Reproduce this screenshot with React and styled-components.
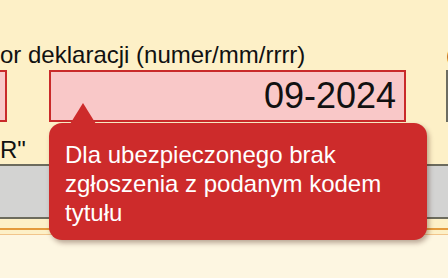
import React from "react";
import styled, { createGlobalStyle } from "styled-components";

const GlobalStyle = createGlobalStyle`
  html, body {
    margin: 0;
    padding: 0;
    background: #fdf0c7;
  }
  * { box-sizing: border-box; }
`;

const Page = styled.div`
  width: 448px;
  height: 278px;
  overflow: hidden;
  background: #fdf0c7;
  font-family: "Liberation Sans", Arial, sans-serif;
  color: #111;
  display: flex;
  flex-direction: column;
`;

const FormArea = styled.div`
  padding-top: 41px;
  display: flex;
  flex-direction: column;
`;

const LabelRow = styled.div`
  display: flex;
  font-size: 24px;
  line-height: 28px;
  height: 29px;
  white-space: nowrap;
`;

const Label = styled.span`
  flex: 0 0 auto;
  width: ${p => p.$width}px;
`;

const FieldRow = styled.div`
  display: flex;
  margin-left: -40px;
`;

const FieldWrap = styled.div`
  position: relative;
  flex: 0 0 auto;
  width: ${p => p.$width}px;
  margin-right: ${p => p.$gap || 0}px;
`;

const Field = styled.div`
  height: 52px;
  border: 2px solid ${p => (p.$error ? "#c92a2a" : "#6d6d62")};
  background: ${p => (p.$error ? "#f9c8c8" : "#fdf0c7")};
  font-size: 36px;
  line-height: 48px;
  text-align: right;
  padding-right: 8px;
`;

const Hint = styled.div`
  font-size: 24px;
  line-height: 28px;
  margin-top: 14px;
  height: 28px;
  white-space: nowrap;
`;

const Band = styled.div`
  height: 55px;
  background: #d3d3d2;
  border-top: 2px solid #6c6b5d;
  border-bottom: 2px solid #6c6b5d;
`;

const Rule = styled.div`
  margin-top: 9px;
  height: 2px;
  background: #e49a3c;
`;

const ThinRule = styled.div`
  margin-top: 4px;
  height: 1px;
  background: #f1c58b;
`;

const Bottom = styled.div`
  flex: 1;
  background: #fdf6e1;
`;

const Tooltip = styled.div`
  position: absolute;
  top: 53px;
  left: 0;
  width: 378px;
  padding: 17px 16px 13px 16px;
  background: #cd2b2b;
  color: #fff;
  border-radius: 13px;
  font-size: 24px;
  line-height: 29px;
  box-shadow: 2px 3px 5px rgba(60, 20, 10, 0.35);
  z-index: 2;

  &::before {
    content: "";
    position: absolute;
    top: -20px;
    left: 21px;
    border-left: 13px solid transparent;
    border-right: 13px solid transparent;
    border-bottom: 21px solid #cd2b2b;
  }
`;

export default function App() {
  return (
    <>
      <GlobalStyle />
      <Page>
        <FormArea>
          <LabelRow>
            <Label $width={446}>or deklaracji (numer/mm/rrrr)</Label>
            <Label $width={100}>(</Label>
          </LabelRow>
          <FieldRow>
            <FieldWrap $width={47} $gap={42}>
              <Field $error />
            </FieldWrap>
            <FieldWrap $width={357} $gap={40}>
              <Field $error>09-2024</Field>
              <Tooltip>
                Dla ubezpieczonego brak zgłoszenia z podanym kodem tytułu
              </Tooltip>
            </FieldWrap>
            <FieldWrap $width={120}>
              <Field />
            </FieldWrap>
          </FieldRow>
          <Hint>R"</Hint>
        </FormArea>
        <Band />
        <Rule />
        <ThinRule />
        <Bottom />
      </Page>
    </>
  );
}
